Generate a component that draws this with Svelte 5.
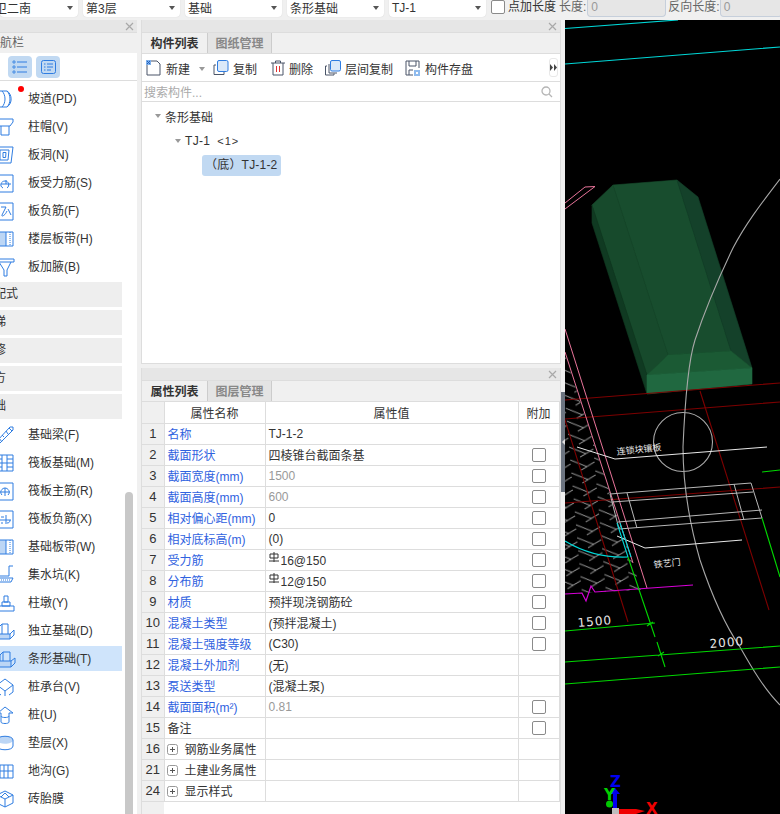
<script>
  const selects = [
    { label: "卫二南", w: 78, first: true },
    { label: "第3层", w: 97 },
    { label: "基础", w: 97 },
    { label: "条形基础", w: 97 },
    { label: "TJ-1", w: 97 },
  ];

  // icon paths sit in an 18x18 box; the box starts 4px left of the panel, so some get cut off
  const icons = {
    slope: { d: "M0 1H11C16 4 17 13 11 17H0M6 1C10 5 10 13 6 17M11 1C15 5 15 13 11 17" },
    cap: { d: "M-2 1H17V4L14 8H2M5 8V17H13V8" },
    hole: { d: "M0 1H17L15 17H0ZM4 4H13L12 14H4ZM7 6.5H10L9.6 11.5H7Z" },
    slabS: { d: "M0 1H17V18H0M5 10H15M10 6V10M7 14C3 12 5 7 9 7C13 7 14 12 11 14" },
    slabF: { d: "M0 1H17V18H0M5 5H10L6 13C5 15 9 14 11 9M12 7L15 13" },
    band: { d: "M0 2H17V16H0ZM10 2V16", f: "M0 2H10V16H0Z", dash: "M14 2V16" },
    haunch: { d: "M0 1H18V4H0ZM3 4L8 12V18H11V12L15 4" },
    beam: { d: "M1 15L14 1H17V4L4 17H1ZM3 12L6 16M6 9L8 11M10 5L12 8M13 2L16 5" },
    raft: { d: "M-1 1H17V17H-1ZM6 1V17M11 1V17M-1 9H17M-1 5H6M11 5H17M-1 13H6M11 13H17" },
    mainbar: { d: "M0 1H17V18H0M4 10H14M9 6V14M6 13C3 10 6 6 9 6C12 6 15 10 12 13" },
    negbar: { d: "M0 1H17V18H0M4 10H15M10 5V14M5 7H8M5 13H7M11 13C13 13 14 12 14 10" },
    pit: { d: "M17 0H13V10H3M1 12H17L15 16H3Z", dash: "M3 14H15" },
    pier: { d: "M3 12H18V17H3ZM6 8H14V12H6ZM8 2H12V8H8Z" },
    isolated: { d: "M3 12V5L6 2H12V12M6 2V12M0 12H14L18 8V13L14 17H0ZM14 12V17", f: "M0 12H14V17H0Z" },
    strip: { d: "M4 11V5L7 2H14V11M7 2V11M2 11H15L19 8V13L15 17H2ZM15 11V17", f: "M2 11H15V17H2Z" },
    pilecap: { d: "M9 1L17 7L9 13L1 7ZM1 7V14M17 7V14M9 13V18M1 14L5 17M17 14L13 17" },
    pile: { d: "M2 7L9 1L17 7L13 7V16C13 18 5 18 5 16V7ZM5 10C5 12 13 12 13 10" },
    cushion: { d: "M1 6C1 1 17 1 17 6V12C17 17 1 17 1 12Z", f: "M1 6C1 1 17 1 17 6C17 11 1 11 1 6Z" },
    trench: { d: "M-1 3H17V16H-1ZM-1 9H17M4 3V16M8 3V16M12 3V16" },
    brick: { d: "M9 1L17 5V13L9 17L1 13V5ZM1 5L9 9L17 5M9 9V17M5 7L9 3L13 7" },
  };

  const upper = [
    ["坡道(PD)", "slope"], ["柱帽(V)", "cap"], ["板洞(N)", "hole"], ["板受力筋(S)", "slabS"],
    ["板负筋(F)", "slabF"], ["楼层板带(H)", "band"], ["板加腋(B)", "haunch"],
  ];
  const sections = ["装配式", "楼梯", "装修", "土方", "基础"];
  const lower = [
    ["基础梁(F)", "beam"], ["筏板基础(M)", "raft"], ["筏板主筋(R)", "mainbar"], ["筏板负筋(X)", "negbar"],
    ["基础板带(W)", "band"], ["集水坑(K)", "pit"], ["柱墩(Y)", "pier"], ["独立基础(D)", "isolated"],
    ["条形基础(T)", "strip"], ["桩承台(V)", "pilecap"], ["桩(U)", "pile"], ["垫层(X)", "cushion"],
    ["地沟(G)", "trench"], ["砖胎膜", "brick"],
  ];

  const rows = [
    { n: 1, name: "名称", val: "TJ-1-2" },
    { n: 2, name: "截面形状", val: "四棱锥台截面条基", box: true },
    { n: 3, name: "截面宽度(mm)", val: "1500", gray: true, box: true },
    { n: 4, name: "截面高度(mm)", val: "600", gray: true, box: true },
    { n: 5, name: "相对偏心距(mm)", val: "0", box: true },
    { n: 6, name: "相对底标高(m)", val: "(0)", box: true },
    { n: 7, name: "受力筋", val: "16@150", bar: true, box: true },
    { n: 8, name: "分布筋", val: "12@150", bar: true, box: true },
    { n: 9, name: "材质", val: "预拌现浇钢筋砼", box: true },
    { n: 10, name: "混凝土类型", val: "(预拌混凝土)", box: true },
    { n: 11, name: "混凝土强度等级", val: "(C30)", box: true },
    { n: 12, name: "混凝土外加剂", val: "(无)" },
    { n: 13, name: "泵送类型", val: "(混凝土泵)" },
    { n: 14, name: "截面面积(m²)", val: "0.81", gray: true, box: true },
    { n: 15, name: "备注", val: "", plain: true, box: true },
    { n: 16, group: "钢筋业务属性" },
    { n: 21, group: "土建业务属性" },
    { n: 24, group: "显示样式" },
  ];
</script>

{#snippet navRow(item)}
  {@const ic = icons[item[1]]}
  <div class="nav-item" class:on={item[0] === "条形基础(T)"}>
    <svg class="nav-icon" width="18" height="18" viewBox="0 0 18 18">
      {#if ic.f}<path d={ic.f} fill="#bcd6f5" />{/if}
      <path d={ic.d} fill="none" stroke="#2f7de1" />
      {#if ic.dash}<path d={ic.dash} fill="none" stroke="#2f7de1" stroke-dasharray="1 1" />{/if}
    </svg>
    <span>{item[0]}</span>
  </div>
{/snippet}

{#snippet closeBar()}
  <div class="closebar">
    <svg width="9" height="9" viewBox="0 0 9 9"><path d="M1 1L8 8M8 1L1 8" stroke="#a8a8a8" stroke-width="1.2" /></svg>
  </div>
{/snippet}

<div class="app">
  <div class="top">
    {#each selects as s}
      <div class="select" class:first={s.first} style="width:{s.w}px">
        <span>{s.label}</span><i class="caret"></i>
      </div>
    {/each}
    <label class="pointlen"><b class="check"></b>点加长度</label>
    <span class="lab l1">长度:</span><div class="inp i1">0</div>
    <span class="lab">反向长度:</span><div class="inp i2">0</div>
  </div>

  <div class="main">
    <aside class="nav">
      {@render closeBar()}
      <div class="nav-title">导航栏</div>
      <div class="nav-tools">
        <button class="tool" aria-label="列表">
          <svg width="16" height="14" viewBox="0 0 16 14"><path d="M5 2H15M5 7H15M5 12H15" stroke="#2f7de1" /><path d="M1 1h2v2H1zM1 6h2v2H1zM1 11h2v2H1z" fill="none" stroke="#2f7de1" stroke-width=".8" /></svg>
        </button>
        <button class="tool" aria-label="详情">
          <svg width="15" height="14" viewBox="0 0 15 14"><rect x=".5" y=".5" width="14" height="13" rx="2" fill="none" stroke="#2f7de1" /><path d="M6 4H12M6 7H12M6 10H10M3 4H4.5M3 7H4.5M3 10H4.5" stroke="#2f7de1" /></svg>
        </button>
      </div>
      <div class="nav-body">
        <div class="nav-list">
          <i class="dot"></i>
          {#each upper as item}{@render navRow(item)}{/each}
          {#each sections as s}<div class="section">{s}</div>{/each}
          {#each lower as item}{@render navRow(item)}{/each}
        </div>
        <div class="nav-scroll"><div class="thumb"></div></div>
      </div>
    </aside>

    <div class="mid">
      <section class="panel list-panel">
        {@render closeBar()}
        <div class="tabs">
          <div class="tab active">构件列表</div>
          <div class="tab">图纸管理</div>
        </div>
        <div class="toolbar">
          <div class="act a1">
            <svg width="16" height="16" viewBox="0 0 16 16"><path d="M1 5V15H14V4L11 1H5" fill="none" stroke="#4a5568" /><path d="M0 0h5v5H0z" fill="#7fb0ea" /><path d="M1 1h1v1H1zM3 1h1v1H3zM2 2h1v1H2zM1 3h1v1H1zM3 3h1v1H3z" fill="#1d5fc0" /></svg>
            新建<i class="caret gray"></i>
          </div>
          <div class="act a2">
            <svg width="16" height="16" viewBox="0 0 16 16"><path d="M3 5H1V14.5H11V12" fill="none" stroke="#4a5568" /><rect x="4.5" y=".5" width="10.5" height="11" rx="1.5" fill="#dbe9f9" stroke="#2f7de1" /></svg>
            复制
          </div>
          <div class="act a3">
            <svg width="14" height="16" viewBox="0 0 14 16"><path d="M0 3H14M4.5 3V1H9.5V3M2 3V15H12V3" fill="none" stroke="#4a5568" /><path d="M5.5 6V12M8.5 6V12" stroke="#e03131" /></svg>
            删除
          </div>
          <div class="act a4">
            <svg width="16" height="16" viewBox="0 0 16 16"><path d="M2 6H.5V15H9V13.5M4 4V13H12" fill="none" stroke="#4a5568" /><rect x="5.5" y=".5" width="10" height="10.5" rx="1.5" fill="#dbe9f9" stroke="#2f7de1" /></svg>
            层间复制
          </div>
          <div class="act a5">
            <svg width="16" height="16" viewBox="0 0 16 16"><path d="M8 15H1V1H14V8M4 1V6H11V1M4 15V10H8" fill="none" stroke="#4a5568" /><path d="M9 10h6v6H9z" fill="#8fbbee" /><path d="M11 12h2v2h-2z" fill="#fff" /></svg>
            构件存盘
          </div>
          <div class="more"><svg width="7" height="7" viewBox="0 0 7 7"><path d="M0 0L3 3.5L0 7ZM4 0L7 3.5L4 7Z" fill="#444" /></svg></div>
        </div>
        <div class="search">
          <span>搜索构件...</span>
          <svg width="12" height="12" viewBox="0 0 12 12"><circle cx="5" cy="5" r="4" fill="none" stroke="#b5b5b5" stroke-width="1.3" /><path d="M8 8L11 11" stroke="#b5b5b5" stroke-width="1.3" /></svg>
        </div>
        <div class="tree">
          <div class="node n1"><i class="caret gray"></i>条形基础</div>
          <div class="node n2"><i class="caret gray"></i>TJ-1 <span class="count">&lt;1&gt;</span></div>
          <div class="node n3"><span class="pill">（底）TJ-1-2</span></div>
        </div>
      </section>

      <section class="panel prop-panel">
        {@render closeBar()}
        <div class="tabs">
          <div class="tab active">属性列表</div>
          <div class="tab">图层管理</div>
        </div>
        <div class="table-wrap">
          <table>
            <colgroup><col class="c1" /><col class="c2" /><col class="c3" /><col class="c4" /></colgroup>
            <thead>
              <tr><th class="num"></th><th>属性名称</th><th>属性值</th><th>附加</th></tr>
            </thead>
            <tbody>
              {#each rows as r}
                <tr>
                  <td class="num">{r.n}</td>
                  {#if r.group}
                    <td class="group">
                      <span class="plus">
                        <svg width="11" height="11" viewBox="0 0 11 11"><rect x=".5" y=".5" width="10" height="10" rx="2" fill="none" stroke="#999" /><path d="M3 5.5H8M5.5 3V8" stroke="#555" /></svg>
                      </span>{r.group}
                    </td>
                    <td></td><td></td>
                  {:else}
                    <td class="name" class:plain={r.plain}>{r.name}</td>
                    <td class:gray={r.gray}>
                      {#if r.bar}
                        <svg class="bar" width="10" height="10" viewBox="0 0 10 10"><path d="M1 2H9V6H1ZM5 0V10M0 9H10" fill="none" stroke="#333" /></svg>
                      {/if}{r.val}
                    </td>
                    <td class="extra">{#if r.box}<b class="check"></b>{/if}</td>
                  {/if}
                </tr>
              {/each}
            </tbody>
          </table>
        </div>
      </section>
    </div>

    <div class="split"><div class="handle"><i></i></div></div>

    <div class="canvas">
      <svg width="215" height="794" viewBox="565 20 215 794" fill="none">
        <defs>
          <pattern id="hatch" width="24" height="13" patternUnits="userSpaceOnUse" patternTransform="rotate(-5)">
            <path d="M0 1L16 9L24 5M16 9L10 12" stroke="#a0a0a0" />
          </pattern>
        </defs>
        <polygon points="565,355 633,563 641,590 565,594" fill="url(#hatch)" />

        <path d="M565 28.500L678 20M565 64L780 47" stroke="#00d8d8" stroke-width="1.200" />
        <path d="M565 203L585 187L595 186.500L565 209" stroke="#e8749a" />

        <!-- the green strip foundation -->
        <polygon points="613,185 677,180 731,351 668,355" fill="#184d2e" stroke="#184d2e" stroke-width=".6" />
        <polygon points="592,205 613,185 668,355 647,375" fill="#174a2c" stroke="#174a2c" stroke-width=".6" />
        <polygon points="592,205 592,223 647,394 647,375" fill="#103a22" stroke="#103a22" stroke-width=".6" />
        <polygon points="677,180 698,197 752,368 731,351" fill="#14412a" stroke="#14412a" stroke-width=".6" />
        <polygon points="647,375 668,355 731,351 752,368" fill="#1b5a34" stroke="#1b5a34" stroke-width=".6" />
        <polygon points="647,375 752,368 752,384 647,394" fill="#206840" stroke="#206840" stroke-width=".6" />

        <path d="M565 400L780 383M565 419L780 402M565 503L780 487M700 391L769 610M565 420L628 622" stroke="#7d0000" stroke-width="1.100" />
        <path d="M565 329L647 588M565 352L633 563" stroke="#e8749a" />

        <path d="M780 179C760 205 745 225 733 248C720 275 705 310 695 340C688 362 685 400 683 447C683 490 690 525 700 560C710 590 725 625 740 647C753 670 765 690 780 705" stroke="#a8a8a8" stroke-width="1.100" />
        <circle cx="683" cy="442" r="29.500" stroke="#a8a8a8" stroke-width="1.100" />

        <path d="M577 447L615 459L767 447M617 536L645 548L742 540" stroke="#e8e8e8" />
        <path d="M610 494L751 483L762 518L619 529L610 494M612 502L753 492M618 522L762 510M627 493L637 528M734 484L744 520" stroke="#b8b8b8" />

        <path d="M617 523L628 557M620 523L631 557M565 541C585 553 605 558 628 557" stroke="#00d8d8" stroke-width="1.100" />
        <path d="M565 594L582 593L586 601L591 586L595 592L693 585" stroke="#d800d8" stroke-width="1.200" />

        <path d="M762 518L780 577M762 472L780 470M628 557L655 637M657 642L665 667M565 631L655 623M565 662L780 646M565 684L780 667M647 626L653 622M658 656L664 652" stroke="#00d800" stroke-width="1.100" />

        <text x="617" y="455" class="cad small" transform="rotate(-6 617 455)">连锁块镶板</text>
        <text x="654" y="568" class="cad small" transform="rotate(-6 654 568)">铁艺门</text>
        <text x="578" y="627" class="cad dim" transform="rotate(-5 578 627)">1500</text>
        <text x="710" y="648" class="cad dim" transform="rotate(-5 710 648)">2000</text>

        <!-- axis gizmo -->
        <rect x="612" y="808" width="7" height="6" fill="#bdbdbd" />
        <path d="M619 809H636L645 811L636 814H619Z" fill="#f00000" />
        <path d="M613 808V794H610L615 788L620 794H617V808Z" fill="#0000f0" />
        <circle cx="609.500" cy="804" r="3.500" fill="#00c800" />
        <text x="610" y="787" class="axis" fill="#0000f0">Z</text>
        <text x="604" y="800" class="axis" fill="#00d000">Y</text>
        <text x="646" y="814" class="axis" fill="#f00000">X</text>
      </svg>
    </div>
  </div>
</div>

<style>
  :global(body) {
    margin: 0;
    background: #f0f0f0;
  }
  .app {
    width: 780px;
    height: 814px;
    display: flex;
    flex-direction: column;
    overflow: hidden;
    font: 12px "Liberation Sans", "Noto Sans CJK SC", sans-serif;
    color: #333;
    background: #f0f0f0;
  }
  i, b { display: block; }

  .top {
    height: 20px;
    display: flex;
    gap: 5px;
    flex: none;
  }
  .select {
    box-sizing: border-box;
    height: 17px;
    background: #fff;
    border-radius: 0 0 4px 4px;
    display: flex;
    align-items: center;
    justify-content: space-between;
    padding: 0 5px 2px 3px;
    box-shadow: 0 0 1px #c8c8c8;
    flex: none;
  }
  .select.first {
    padding-left: 0;
  }
  .select.first span { margin-left: -5px; }
  .caret {
    width: 0;
    height: 0;
    border: 3px solid transparent;
    border-top: 4px solid #555;
    border-bottom: 0;
  }
  .caret.gray { border-top-color: #999; }
  .check {
    box-sizing: border-box;
    width: 14px;
    height: 14px;
    border: 1px solid #8a8a8a;
    border-radius: 2px;
    background: #fff;
    flex: none;
  }
  .pointlen {
    display: flex;
    align-items: flex-start;
    gap: 3px;
    line-height: 14px;
    white-space: nowrap;
    flex: none;
  }
  .lab {
    color: #666;
    line-height: 14px;
    white-space: nowrap;
    margin-left: -3px;
    flex: none;
  }
  .lab.l1 { margin-left: -2px; }
  .inp {
    box-sizing: border-box;
    height: 17px;
    background: #e6e6e6;
    border: 1px solid #c6cfdb;
    border-top: 0;
    border-radius: 0 0 4px 4px;
    color: #999;
    padding-left: 3px;
    line-height: 14px;
    margin-left: -5px;
    flex: none;
  }
  .i1 { width: 79px; margin-left: -4px; }
  .i2 { width: 62px; }

  .main {
    flex: 1;
    display: flex;
    min-height: 0;
  }

  .closebar {
    height: 12px;
    flex: none;
    background: #e6e6e6;
    display: flex;
    justify-content: flex-end;
    align-items: center;
    padding-right: 3px;
  }

  .nav {
    width: 137px;
    flex: none;
    margin-right: 4px;
    background: #fff;
    display: flex;
    flex-direction: column;
    overflow: hidden;
  }
  .nav-title {
    height: 20px;
    line-height: 20px;
    margin-left: -12px;
    color: #666;
    background: #f0f0f0;
    border-top: 1px solid #ddd;
    flex: none;
    width: 160px;
  }
  .nav-tools {
    height: 27px;
    flex: none;
    display: flex;
    gap: 4px;
    padding-left: 8px;
    align-items: center;
    border-bottom: 1px solid #ddd;
  }
  .tool {
    width: 24px;
    height: 22px;
    padding: 0;
    border: 0;
    border-radius: 4px;
    background: #c1d9f2;
    display: flex;
    align-items: center;
    justify-content: center;
  }
  .nav-body {
    flex: 1;
    display: flex;
    min-height: 0;
    overflow: hidden;
  }
  .nav-list {
    position: relative;
    width: 122px;
    flex: none;
    padding-top: 5px;
  }
  .dot {
    position: absolute;
    left: 18px;
    top: 5px;
    width: 6px;
    height: 6px;
    border-radius: 50%;
    background: #f00;
  }
  .nav-item {
    height: 25px;
    margin-bottom: 3px;
    display: flex;
    align-items: center;
    gap: 14px;
    white-space: nowrap;
  }
  .nav-item span { margin-top: -2px; }
  .nav-item.on { background: #cfe4fb; }
  .nav-icon {
    margin-left: -4px;
    flex: none;
    overflow: visible;
  }
  .section {
    height: 25px;
    margin-bottom: 3px;
    line-height: 24px;
    background: #eee;
    text-indent: -18px;
  }
  .nav-scroll {
    padding: 411px 0 0 3px;
  }
  .thumb {
    width: 8px;
    height: 400px;
    border-radius: 4px 4px 0 0;
    background: #c8c8c8;
  }

  .mid {
    width: 420px;
    flex: none;
    display: flex;
    flex-direction: column;
    gap: 4px;
  }
  .panel {
    box-sizing: border-box;
    display: flex;
    flex-direction: column;
    border: 1px solid #ddd;
    border-top: 0;
    background: #fff;
    min-height: 0;
  }
  .list-panel { height: 344px; flex: none; }
  .prop-panel { flex: 1; border-bottom: 0; }

  .tabs {
    height: 22px;
    flex: none;
    display: flex;
    background: #f0f0f0;
    border-top: 1px solid #ddd;
    border-bottom: 1px solid #ddd;
    box-sizing: border-box;
  }
  .tab {
    width: 65px;
    box-sizing: border-box;
    text-align: center;
    line-height: 22px;
    color: #888;
    font-weight: 700;
    background: #e4e4e4;
    border-left: 1px solid #ccc;
    border-right: 1px solid #ccc;
  }
  .tab.active {
    color: #333;
    background: #f0f0f0;
    border: 0;
  }

  .toolbar {
    height: 28px;
    flex: none;
    display: flex;
    align-items: center;
    border-bottom: 1px solid #ddd;
    box-sizing: border-box;
    padding: 2px 0 0 4px;
  }
  .act {
    display: flex;
    align-items: center;
    gap: 4px;
    white-space: nowrap;
  }
  .act svg { margin-top: -1px; }
  .act .caret { margin-left: 5px; }
  .a1 { width: 67px; }
  .a2 { width: 58px; }
  .a3 { width: 54px; }
  .a4 { width: 80px; }
  .a5 { width: 144px; }
  .more {
    width: 9px;
    height: 19px;
    margin-top: -2px;
    display: flex;
    align-items: center;
    justify-content: center;
    border: 1px solid #e8e8e8;
    border-radius: 3px;
    box-sizing: border-box;
  }
  .search {
    height: 20px;
    flex: none;
    box-sizing: border-box;
    display: flex;
    align-items: center;
    justify-content: space-between;
    padding: 0 7px 0 2px;
    border-bottom: 1px solid #ddd;
    color: #aaa;
  }
  .tree { padding-top: 2px; }
  .node {
    height: 24px;
    display: flex;
    align-items: center;
    gap: 3px;
    white-space: nowrap;
  }
  .n1 { padding-left: 13px; gap: 4px; }
  .n2 { padding-left: 33px; gap: 4px; letter-spacing: 0.3px; margin-top: 1px; }
  .count { font-size: 11px; margin-left: 3px; letter-spacing: 1px; }
  .n3 { padding-left: 60px; }
  .pill {
    background: #c1d9f2;
    border-radius: 3px;
    height: 21px;
    line-height: 21px;
    width: 79px;
    padding-left: 3px;
    box-sizing: border-box;
    letter-spacing: 0.2px;
  }

  .table-wrap {
    flex: 1;
    background: linear-gradient(to right, #f0f0f0 22px, #fff 22px);
    overflow: hidden;
  }
  table {
    border-collapse: collapse;
    table-layout: fixed;
    width: 417px;
  }
  .c1 { width: 22px; }
  .c2 { width: 101px; }
  .c3 { width: 253px; }
  .c4 { width: 41px; }
  th, td {
    height: 21px;
    padding: 0;
    box-sizing: border-box;
    border: 1px solid #ddd;
    border-top: 0;
    border-left: 0;
    font-weight: 400;
    white-space: nowrap;
    overflow: hidden;
  }
  th { background: #fff; text-align: center; }
  td { padding-left: 3px; }
  td.num {
    padding: 0;
    text-align: center;
    background: #f0f0f0;
    font-size: 13px;
  }
  th.num { background: #f0f0f0; }
  .name { color: #2f62e0; padding-left: 3px; }
  .name.plain { color: #333; }
  .gray { color: #999; }
  .extra { padding: 0; }
  .extra .check { margin: 0 0 0 13px; }
  .bar { margin-right: 2px; vertical-align: 3px; }
  .group { padding-left: 2px; overflow: visible; }
  .plus {
    display: inline-block;
    width: 18px;
    vertical-align: -1px;
  }

  .split {
    width: 4px;
    flex: none;
    padding-top: 372px;
    background: #f0f0f0;
  }
  .handle {
    height: 100px;
    background: #6c7480;
    display: flex;
    align-items: center;
    justify-content: center;
  }
  .handle i {
    width: 0;
    height: 0;
    border: 3px solid transparent;
    border-right: 3px solid #ddd;
    border-left: 0;
  }
  .canvas {
    flex: 1;
    background: #000;
    min-width: 0;
  }
  .canvas svg { display: block; }
  .cad { font-family: "DejaVu Sans", "Noto Sans CJK SC", sans-serif; fill: #e8e8e8; }
  .small { font-size: 9px; }
  .dim { font-size: 12px; letter-spacing: 1px; }
  .axis { font: 700 15px "DejaVu Sans", sans-serif; }
</style>
